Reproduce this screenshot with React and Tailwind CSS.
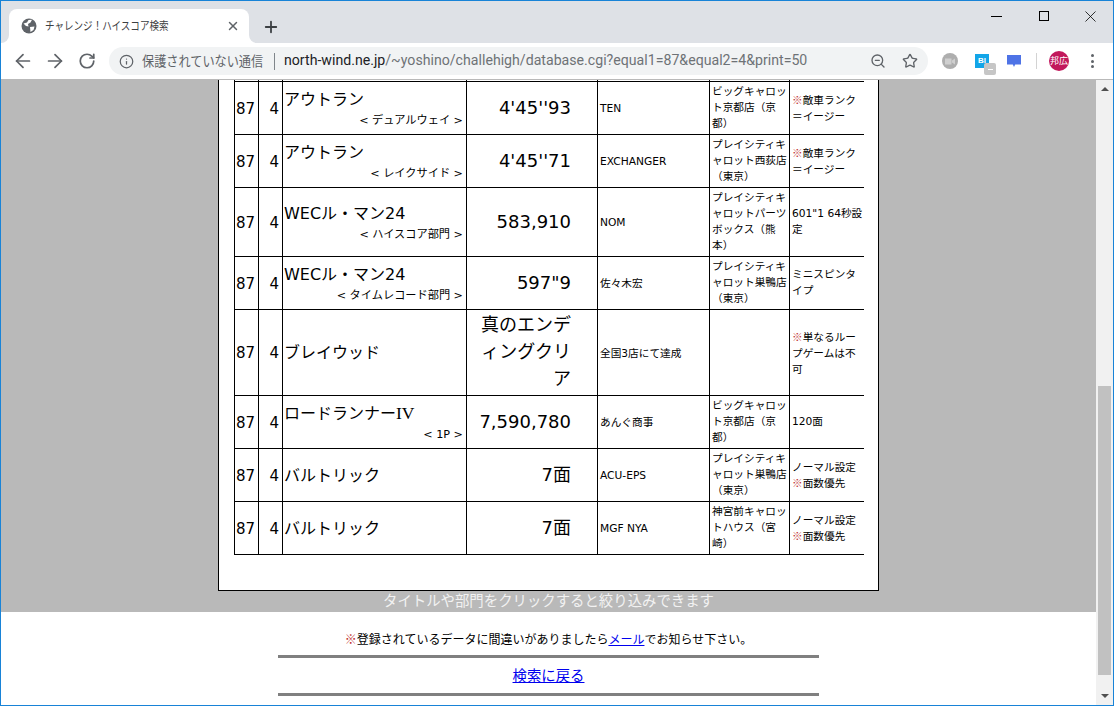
import React from 'react';
import { ArrowLeft, ArrowRight, RotateCw, Info, Star, ZoomOut, X, Plus } from 'lucide-react';

const rows = [
  { title: 'アウトラン', sub: '< デュアルウェイ >', score: "4'45''93", player: 'TEN', shop: 'ビッグキャロッ\nト京都店（京\n都）', note: '※敵車ランク\n＝イージー', h: 'h-[53px]' },
  { title: 'アウトラン', sub: '< レイクサイド >', score: "4'45''71", player: 'EXCHANGER', shop: 'プレイシティキ\nャロット西荻店\n（東京）', note: '※敵車ランク\n＝イージー', h: 'h-[53px]' },
  { title: 'WECル・マン24', sub: '< ハイスコア部門 >', score: '583,910', player: 'NOM', shop: 'プレイシティキ\nャロットパーツ\nボックス（熊\n本）', note: '601"1 64秒設\n定', h: 'h-[69px]' },
  { title: 'WECル・マン24', sub: '< タイムレコード部門 >', score: '597"9', player: '佐々木宏', shop: 'プレイシティキ\nャロット巣鴨店\n（東京）', note: 'ミニスピンタ\nイプ', h: 'h-[53px]' },
  { title: 'ブレイウッド', score: '真のエンデ\nィングクリ\nア', player: '全国3店にて達成', shop: '', note: '※単なるルー\nプゲームは不\n可', h: 'h-[86px]' },
  { title: <>ロードランナー<span className="text-[17.5px] font-['Liberation_Serif',serif]">IV</span></>, sub: '< 1P >', score: '7,590,780', player: 'あんぐ商事', shop: 'ビッグキャロッ\nト京都店（京\n都）', note: '120面', h: 'h-[53px]' },
  { title: 'バルトリック', score: '7面', player: 'ACU-EPS', shop: 'プレイシティキ\nャロット巣鴨店\n（東京）', note: 'ノーマル設定\n※面数優先', h: 'h-[53px]' },
  { title: 'バルトリック', score: '7面', player: 'MGF NYA', shop: '神宮前キャロッ\nトハウス（宮\n崎）', note: 'ノーマル設定\n※面数優先', h: 'h-[53px]' },
];

const cell = 'border-l border-b border-black align-middle';

function Note({ text }) {
  // one block per line, ※ is tinted red in the original page
  return text.split('\n').map((line, n) => (
    <div key={n}>
      {line.split('※').map((p, i) => (
        <React.Fragment key={i}>
          {i > 0 && <span className="text-[#c03030]">※</span>}
          {p}
        </React.Fragment>
      ))}
    </div>
  ));
}

function Globe() {
  return (
    <svg width="16" height="16" viewBox="0 0 16 16">
      <circle cx="8" cy="8" r="7.5" fill="#5f6368" />
      <path d="M2.5 5.5 L6 4.5 L7.5 2 L11 1.8 L9.5 4.5 L7 6 L7.5 8.5 L5 8 Z" fill="#fff" />
      <path d="M9 9 L13.5 8.5 L12.5 12 L9.5 14 Z" fill="#fff" />
    </svg>
  );
}

function Toolbar() {
  return (
    <div className="h-[37px] bg-white flex items-center border-b border-[#b9b9b9] shrink-0">
      <div className="w-[32px] ml-[6px] flex justify-center"><ArrowLeft size={22} strokeWidth={1.9} className="text-[#5f6368]" /></div>
      <div className="w-[32px] flex justify-center"><ArrowRight size={22} strokeWidth={1.9} className="text-[#5f6368]" /></div>
      <div className="w-[32px] flex justify-center"><RotateCw size={18} strokeWidth={2.3} className="text-[#5f6368]" /></div>

      {/* Address bar */}
      <div className="ml-[6px] w-[819px] h-[28px] rounded-full bg-[#f1f3f4] flex items-center pl-[10px] font-['Roboto','Noto_Sans_CJK_JP',sans-serif] whitespace-nowrap">
        <Info size={15} strokeWidth={2} className="text-[#5f6368]" />
        <span className="ml-[8px] w-[120px] inline-block origin-left scale-x-[0.9] text-[13.5px] text-[#5f6368]">保護されていない通信</span>
        <span className="ml-[12px] w-px h-[17px] bg-[#80868b]" />
        <span className="ml-[9px] text-[14.15px] text-[#202124]">north-wind.ne.jp<span className="text-[#6e7276]">/~yoshino/challehigh/database.cgi?equal1=87&equal2=4&print=50</span></span>
        <ZoomOut size={16} strokeWidth={2} className="ml-auto text-[#5f6368]" />
        <Star size={16} strokeWidth={2} className="ml-[16px] mr-[10px] text-[#5f6368]" />
      </div>

      {/* Extensions */}
      <div className="ml-[14px] w-[16px] h-[16px] rounded-full bg-[#aeaeae] flex items-center justify-center">
        <svg width="10" height="7" viewBox="0 0 10 7"><path d="M0 0.5h6.5v6H0z M7 2.5L10 0.5v6L7 4.5z" fill="#cfcfcf" /></svg>
      </div>
      <div className="ml-[17px] relative w-[14px] h-[14px] bg-[#12a5e8] text-white text-[8px] font-bold leading-[14px] text-center font-['Liberation_Sans',sans-serif]">
        Bl
        <span className="absolute left-[9px] top-[9px] w-[12px] h-[12px] rounded-[2px] bg-[#c6c6c6] flex items-center justify-center">
          <span className="w-[5px] h-[1px] bg-white" />
        </span>
      </div>
      <div className="ml-[18px] w-[14px]">
        <svg width="14" height="13" viewBox="0 0 14 13"><path d="M0 0h14v9.5H8.2L7 12 5.8 9.5H0z" fill="#4e73e6" /></svg>
      </div>
      <span className="ml-[15px] w-px h-[16px] bg-[#d3d3d3]" />
      <div className="ml-[12px] w-[20px] h-[20px] rounded-full bg-[#c2185b] text-white text-[9px] leading-[20px] text-center font-['Noto_Sans_CJK_JP',sans-serif]">邦広</div>
      <div className="ml-[22px] flex flex-col gap-[2.5px]">
        <span className="w-[3px] h-[3px] rounded-full bg-[#5f6368]" />
        <span className="w-[3px] h-[3px] rounded-full bg-[#5f6368]" />
        <span className="w-[3px] h-[3px] rounded-full bg-[#5f6368]" />
      </div>
    </div>
  );
}

function ScoreTable() {
  return (
    <table className="table-fixed border-separate border-spacing-0 w-[630px] ml-[15px] text-black">
      <colgroup>
        <col className="w-[24px]" />
        <col className="w-[24px]" />
        <col className="w-[184px]" />
        <col className="w-[131px]" />
        <col className="w-[112px]" />
        <col className="w-[80px]" />
        <col className="w-[75px]" />
      </colgroup>
      <tbody>
        <tr>
          {[0, 1, 2, 3, 4, 5, 6].map((i) => (
            <td key={i} className="border-l border-b border-black h-[2px] p-0" />
          ))}
        </tr>
        {rows.map((r, i) => (
          <tr key={i} className={r.h}>
            <td className={`${cell} text-right pr-[3px] pt-[2px] text-[15px]`}>87</td>
            <td className={`${cell} text-right pr-[3px] pt-[2px] text-[15px]`}>4</td>
            <td className={`${cell} pl-[1px] pt-[3px]`}>
              <div className="text-[16px] leading-[21px] mt-[-3px]">{r.title}</div>
              {r.sub && <div className="text-[11.2px] leading-[15px] text-right pr-[3px] mt-[3px]">{r.sub}</div>}
            </td>
            <td className={`${cell} text-right pr-[26px] pb-[2px] text-[18px] leading-[27px] whitespace-pre-line`}>{r.score}</td>
            <td className={`${cell} pl-[2px] pt-[2px] text-[10.67px]`}>{r.player}</td>
            <td className={`${cell} pl-[2px] text-[10.67px] leading-[16px] whitespace-pre-line`}>{r.shop}</td>
            <td className={`${cell} pl-[2px] text-[10.67px] leading-[16px] ${r.note.includes('※') ? "font-['Noto_Sans_CJK_JP',sans-serif]" : ''}`}><Note text={r.note} /></td>
          </tr>
        ))}
      </tbody>
    </table>
  );
}

export default function App() {
  return (
    <div className="w-[1114px] h-[706px] overflow-hidden flex flex-col border border-[#1883d7] font-['DejaVu_Sans','Noto_Sans_CJK_JP',sans-serif]">
      {/* Tab strip */}
      <div className="h-[42px] bg-[#dee1e6] flex items-end shrink-0">
        <div className="relative ml-[8px] w-[240px] h-[34px] bg-white rounded-t-lg flex items-center pl-[12px] pr-[9px] font-['Noto_Sans_CJK_JP',sans-serif]">
          <span className="absolute left-[-8px] bottom-0 w-[8px] h-[8px] bg-white"><span className="block w-full h-full bg-[#dee1e6] rounded-br-lg" /></span>
          <span className="absolute right-[-8px] bottom-0 w-[8px] h-[8px] bg-white"><span className="block w-full h-full bg-[#dee1e6] rounded-bl-lg" /></span>
          <Globe />
          <span className="ml-[8px] w-[125px] inline-block origin-left scale-x-[0.83] text-[11.5px] text-[#3c4043] whitespace-nowrap">チャレンジ！ハイスコア検索</span>
          <X size={14} strokeWidth={2.5} className="ml-auto text-[#5f6368]" />
        </div>
        <Plus size={18} strokeWidth={2.4} className="ml-[13px] mb-[7px] text-[#3c4043]" />
        {/* Window controls */}
        <div className="ml-auto self-start flex items-center h-[30px] text-black">
          <div className="w-[46px] flex justify-center"><span className="w-[11px] h-px bg-black mr-[3px]" /></div>
          <div className="w-[46px] flex justify-center"><span className="w-[10px] h-[10px] border border-black" /></div>
          <div className="w-[46px] flex justify-center"><X size={19} strokeWidth={1} /></div>
        </div>
      </div>

      <Toolbar />

      {/* Page + scrollbar */}
      <div className="flex-1 flex min-h-0">
        <div className="flex-1 flex flex-col min-w-0 bg-white">
          <div className="bg-[#b9b9b9] flex flex-col items-center">
            <div className="w-[661px] bg-white border-x border-b border-black pb-[35px]">
              <ScoreTable />
            </div>
            <div className="h-[21px] text-[14.4px] leading-[20px] text-[#f2f2f2]">タイトルや部門をクリックすると絞り込みできます</div>
          </div>

          <div className="flex-1 flex flex-col items-center pt-[19px] font-['Noto_Sans_CJK_JP',sans-serif]">
            <p className="text-[12px] leading-[16px] text-black"><span className="text-[#c03030]">※</span>登録されているデータに間違いがありましたら<a href="#" className="text-[#0000ee] underline">メール</a>でお知らせ下さい。</p>
            <div className="w-[541px] h-[3px] bg-[#808080] mt-[8px]" />
            <a href="#" className="mt-[7px] text-[14.4px] leading-[20px] text-[#0000ee] underline">検索に戻る</a>
            <div className="w-[541px] h-[3px] bg-[#808080] mt-[8px]" />
          </div>
        </div>

        {/* Scrollbar */}
        <div className="w-[17px] bg-[#f1f1f1] flex flex-col items-center shrink-0">
          <div className="h-[17px] flex items-center justify-center"><span className="w-0 h-0 border-x-[4px] border-x-transparent border-b-[4px] border-b-[#505050]" /></div>
          <div className="mt-[289px] w-[13px] h-[289px] bg-[#c1c1c1]" />
          <div className="mt-[12px] h-[17px] flex items-center justify-center"><span className="w-0 h-0 border-x-[4px] border-x-transparent border-t-[4px] border-t-[#505050]" /></div>
        </div>
      </div>
    </div>
  );
}
